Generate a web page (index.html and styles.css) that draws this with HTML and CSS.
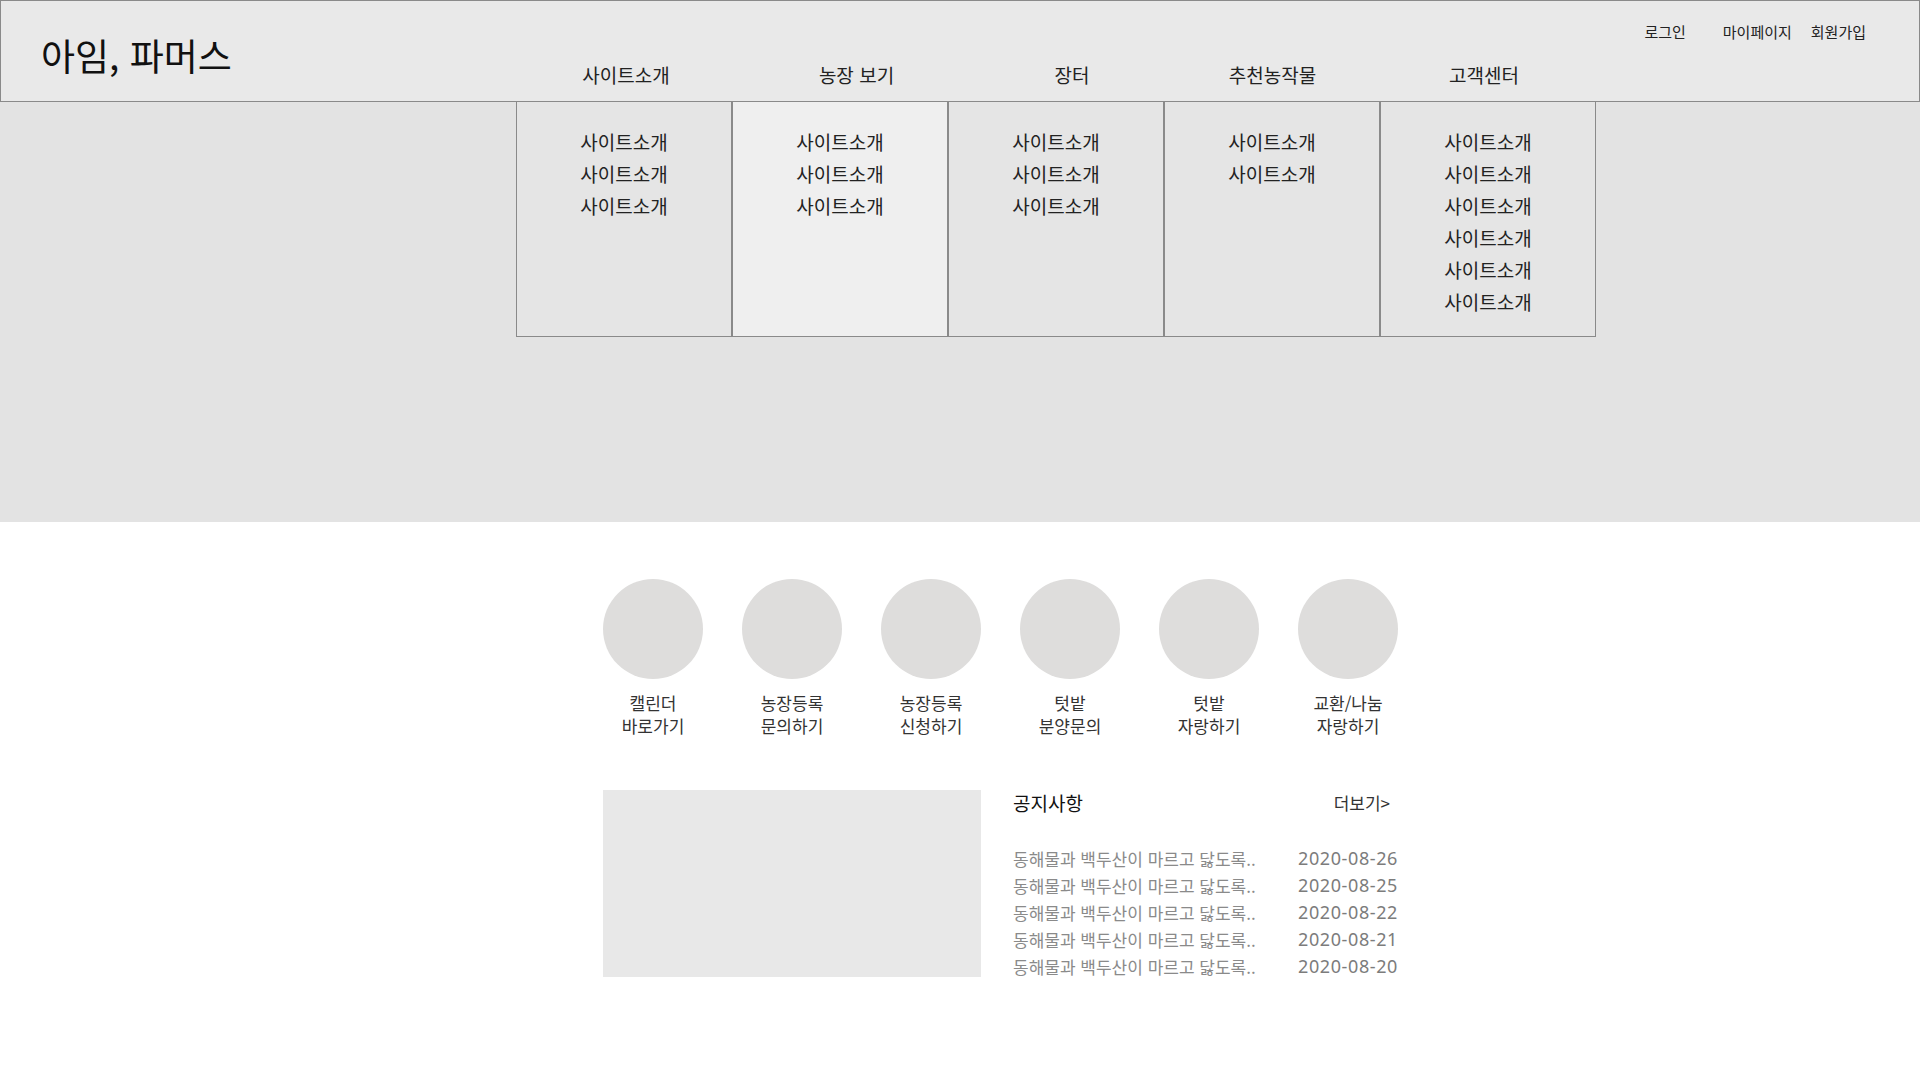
FILE: index.html
```html
<!DOCTYPE html>
<html lang="ko">
<head>
    <meta charset="UTF-8">
    <meta name="viewport" content="width=device-width, initial-scale=1.0">
    <title>아임, 파머스</title>
    <link rel="stylesheet" href="styles.css">
</head>
<body>

    <header class="header">
        <div class="logo">아임, 파머스</div>
        <div class="header-right">
            <div class="util">
                <a href="#" class="util-login">로그인</a>
                <a href="#" class="util-my">마이페이지</a>
                <a href="#">회원가입</a>
            </div>
            <nav class="gnb">
                <a href="#">사이트소개</a>
                <a href="#">농장 보기</a>
                <a href="#">장터</a>
                <a href="#">추천농작물</a>
                <a href="#">고객센터</a>
            </nav>
        </div>

        <div class="sub-menu">
            <ul>
                <li>사이트소개</li>
                <li>사이트소개</li>
                <li>사이트소개</li>
            </ul>
            <ul class="on">
                <li>사이트소개</li>
                <li>사이트소개</li>
                <li>사이트소개</li>
            </ul>
            <ul>
                <li>사이트소개</li>
                <li>사이트소개</li>
                <li>사이트소개</li>
            </ul>
            <ul>
                <li>사이트소개</li>
                <li>사이트소개</li>
            </ul>
            <ul>
                <li>사이트소개</li>
                <li>사이트소개</li>
                <li>사이트소개</li>
                <li>사이트소개</li>
                <li>사이트소개</li>
                <li>사이트소개</li>
            </ul>
        </div>
    </header>

    <section class="visual"></section>

    <main class="main">
        <ul class="quick">
            <li><span class="circle"></span><p>캘린더<br>바로가기</p></li>
            <li><span class="circle"></span><p>농장등록<br>문의하기</p></li>
            <li><span class="circle"></span><p>농장등록<br>신청하기</p></li>
            <li><span class="circle"></span><p>텃밭<br>분양문의</p></li>
            <li><span class="circle"></span><p>텃밭<br>자랑하기</p></li>
            <li><span class="circle"></span><p>교환/나눔<br>자랑하기</p></li>
        </ul>

        <div class="board">
            <div class="board-img"></div>
            <div class="notice">
                <div class="notice-head">
                    <h2>공지사항</h2>
                    <a href="#">더보기&gt;</a>
                </div>
                <ul class="notice-list">
                    <li><span>동해물과 백두산이 마르고 닳도록..</span><span class="date">2020-08-26</span></li>
                    <li><span>동해물과 백두산이 마르고 닳도록..</span><span class="date">2020-08-25</span></li>
                    <li><span>동해물과 백두산이 마르고 닳도록..</span><span class="date">2020-08-22</span></li>
                    <li><span>동해물과 백두산이 마르고 닳도록..</span><span class="date">2020-08-21</span></li>
                    <li><span>동해물과 백두산이 마르고 닳도록..</span><span class="date">2020-08-20</span></li>
                </ul>
            </div>
        </div>
    </main>

</body>
</html>
```

FILE: styles.css
```css
* { box-sizing: border-box; }
body { margin: 0; font-family: "Noto Sans CJK KR", "Noto Sans", sans-serif; color: #222; background: #fff; }
a { color: inherit; text-decoration: none; }
ul { list-style: none; margin: 0; padding: 0; }
p, h2 { margin: 0; }

/* header */
.header { position: relative; display: flex; height: 102px; background: #e9e9e9; border: 1px solid #8a8a8a; }
.logo { width: 515px; padding: 8px 0 0 40px; display: flex; align-items: center; font-size: 37px; line-height: 1; color: #111; }
.header-right { flex: 1; display: flex; flex-direction: column; }
.util { display: flex; justify-content: flex-end; padding: 21px 53px 0 0; font-size: 15px; line-height: 20px; }
.util-login { margin-right: 37px; }
.util-my { margin-right: 19px; }
.gnb { display: grid; grid-template-columns: 220px 241px 190px 211px 212px; margin-top: 20px; font-size: 19px; line-height: 26px; text-align: center; }

.sub-menu { position: absolute; top: 100px; left: 515px; display: flex; z-index: 10; }
.sub-menu ul { width: 216px; height: 236px; padding-top: 24px; background: #e5e5e5; border: 1px solid #8a8a8a; text-align: center; font-size: 19px; line-height: 32px; }
.sub-menu ul.on { background: #efefef; }

/* visual */
.visual { height: 420px; background: #e3e3e3; }

/* main */
.main { width: 795px; margin-left: 603px; }
.quick { display: flex; justify-content: space-between; margin-top: 57px; }
.quick li { width: 100px; display: flex; flex-direction: column; align-items: center; }
.circle { display: block; width: 100px; height: 100px; border-radius: 50%; background: #dedddc; }
.quick p { margin-top: 12px; font-size: 17px; line-height: 23px; text-align: center; color: #333; white-space: nowrap; }

.board { display: flex; margin-top: 53px; }
.board-img { width: 378px; height: 187px; background: #e8e8e8; }
.notice { flex: 1; margin-left: 32px; }
.notice-head { display: flex; justify-content: space-between; align-items: center; padding-right: 8px; }
.notice-head h2 { font-size: 19px; font-weight: normal; line-height: 26px; color: #111; }
.notice-head a { font-size: 17px; line-height: 24px; color: #333; }
.notice-list { margin-top: 29px; }
.notice-list li { display: flex; justify-content: space-between; font-size: 17px; line-height: 27px; color: #8a8a8a; }
.notice-list .date { font-family: "Noto Sans", sans-serif; font-size: 18px; letter-spacing: 0.6px; color: #7c7c7c; }
```
